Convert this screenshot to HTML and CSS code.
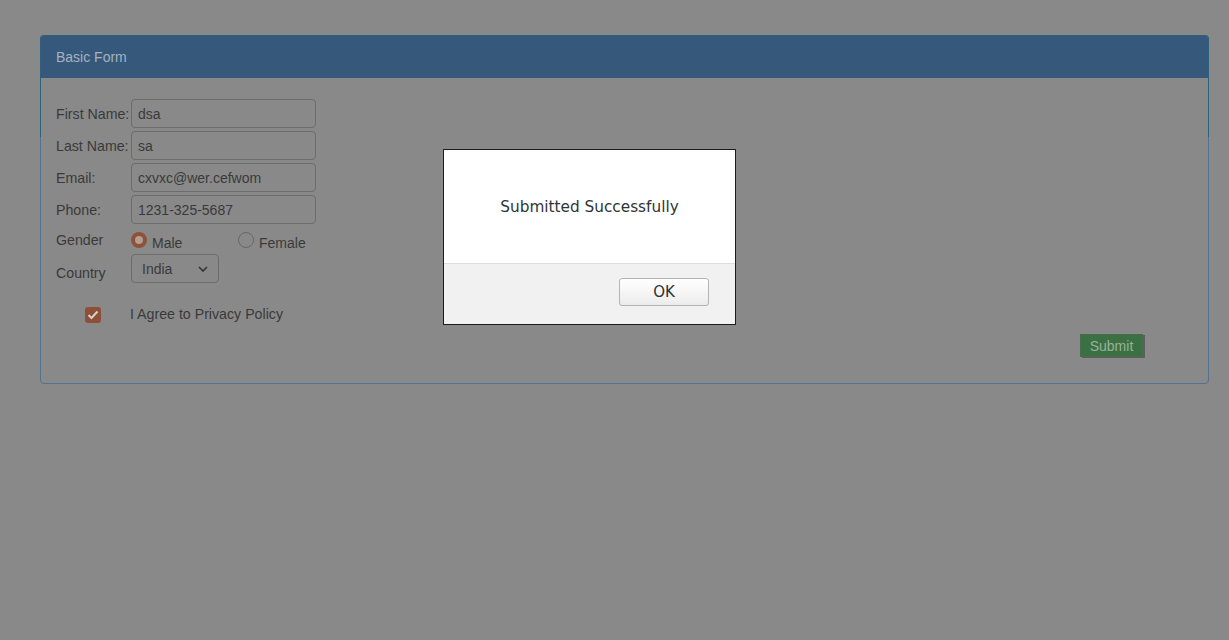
FILE: index.html
```html
<!DOCTYPE html>
<html>
<head>
<meta charset="utf-8">
<title>Basic Form</title>
<link rel="stylesheet" href="styles.css">
</head>
<body>
<div class="page">
  <div class="panel">
    <div class="panel-heading">Basic Form</div>
    <div class="panel-body">
      <div class="field">
        <label class="label">First Name:</label>
        <input class="input" type="text" value="dsa">
      </div>
      <div class="field">
        <label class="label">Last Name:</label>
        <input class="input" type="text" value="sa">
      </div>
      <div class="field">
        <label class="label">Email:</label>
        <input class="input" type="text" value="cxvxc@wer.cefwom">
      </div>
      <div class="field">
        <label class="label">Phone:</label>
        <input class="input" type="text" value="1231-325-5687">
      </div>
      <div class="field gender">
        <span class="label">Gender</span>
        <span class="option">
          <span class="radio checked"></span>
          <span class="option-text">Male</span>
        </span>
        <span class="option">
          <span class="radio"></span>
          <span class="option-text">Female</span>
        </span>
      </div>
      <div class="field country">
        <span class="label">Country</span>
        <div class="select">
          <span>India</span>
          <svg width="10" height="6" viewBox="0 0 10 6"><path d="M1 1 L5 5 L9 1" fill="none" stroke="#333" stroke-width="1.6"/></svg>
        </div>
      </div>
      <div class="agree">
        <span class="checkbox">
          <svg width="12" height="10" viewBox="0 0 12 10"><path d="M1.5 5 L4.5 8 L10.5 1.5" fill="none" stroke="#d8cfcb" stroke-width="2"/></svg>
        </span>
        <span class="agree-text">I Agree to Privacy Policy</span>
      </div>
      <div class="actions">
        <button class="submit">Submit</button>
      </div>
    </div>
  </div>
</div>
<div class="backdrop">
  <div class="dialog">
    <div class="dialog-body">Submitted Successfully</div>
    <div class="dialog-footer">
      <button class="ok">OK</button>
    </div>
  </div>
</div>
</body>
</html>
```
FILE: styles.css
```css
html, body {
  margin: 0;
  padding: 0;
}
body {
  background: #898989;
  font-family: "Liberation Sans", Arial, sans-serif;
  font-size: 14px;
  color: #3a3a3a;
  height: 640px;
  overflow: hidden;
}
.page {
  padding: 35px 20px 0 40px;
}
.panel {
  position: relative;
  border: 1px solid #52728f;
  border-radius: 4px;
}
.panel::before {
  content: "";
  position: absolute;
  top: -1px;
  left: -1px;
  right: -1px;
  height: 101px;
  border: 1px solid #2d6079;
  border-bottom: none;
  border-radius: 4px 4px 0 0;
  pointer-events: none;
}
.panel-heading {
  height: 42px;
  line-height: 42px;
  padding-left: 15px;
  background: #35587b;
  color: #a6b2bf;
  font-size: 14px;
  border-radius: 3px 3px 0 0;
}
.panel-body {
  padding: 21px 15px 26px 15px;
}
.field {
  display: flex;
  align-items: center;
  margin-bottom: 3px;
}
.label {
  width: 75px;
  flex: none;
  line-height: 20px;
  font-size: 14.2px;
}
.input {
  box-sizing: border-box;
  width: 185px;
  height: 29px;
  border: 1px solid #6c6c6c;
  border-radius: 4px;
  background: transparent;
  padding: 0 6px;
  font-family: "Liberation Sans", Arial, sans-serif;
  font-size: 14px;
  color: #3a3a3a;
  outline: none;
}
.field.gender {
  align-items: flex-start;
  height: 26px;
  margin-bottom: 1px;
}
.gender .label {
  line-height: 26px;
}
.option {
  display: flex;
  align-items: flex-start;
  width: 107px;
}
.radio {
  box-sizing: border-box;
  width: 16px;
  height: 16px;
  margin-top: 5px;
  border-radius: 50%;
  border: 1px solid #666;
  flex: none;
}
.radio.checked {
  border: 4px solid #8e5139;
  background: #b39c92;
}
.option-text {
  margin-left: 5px;
  margin-top: 6px;
  line-height: 20px;
}
.field.country {
  align-items: flex-start;
}
.country .label {
  margin-top: 9px;
}
.select {
  box-sizing: border-box;
  width: 88px;
  height: 29px;
  border: 1px solid #6c6c6c;
  border-radius: 4px;
  display: flex;
  align-items: center;
  justify-content: space-between;
  padding: 0 10px 0 10px;
}
.select svg {
  margin-top: 1px;
}
.agree {
  display: flex;
  align-items: center;
  margin-top: 24px;
  padding-left: 29px;
  height: 16px;
}
.checkbox {
  box-sizing: border-box;
  width: 16px;
  height: 16px;
  border-radius: 3px;
  background: #8c5039;
  display: flex;
  align-items: center;
  justify-content: center;
  flex: none;
}
.agree-text {
  margin-left: 29px;
  margin-top: -2px;
  font-size: 14.2px;
}
.actions {
  display: flex;
  justify-content: flex-end;
  margin-top: 11px;
  padding-right: 50px;
}
.submit {
  box-sizing: border-box;
  width: 63px;
  height: 23px;
  background: #3b7042;
  color: #98b29b;
  border: 1px solid #4b6b4e;
  box-shadow: 2px 1px 0 #5d5d5d;
  font-family: "Liberation Sans", Arial, sans-serif;
  font-size: 14px;
  padding: 0;
  cursor: pointer;
}
.backdrop {
  position: fixed;
  inset: 0;
}
.dialog {
  position: absolute;
  left: 443px;
  top: 149px;
  width: 291px;
  border: 1px solid #1c1c1c;
  background: #fff;
  font-family: "DejaVu Sans", sans-serif;
  color: #2e3436;
}
.dialog-body {
  height: 113px;
  display: flex;
  align-items: center;
  justify-content: center;
  font-size: 15.3px;
  box-sizing: border-box;
}
.dialog-footer {
  height: 61px;
  box-sizing: border-box;
  border-top: 1px solid #dedede;
  background: #f1f1f1;
  display: flex;
  justify-content: flex-end;
  align-items: flex-start;
  padding: 14px 26px 0 0;
}
.ok {
  box-sizing: border-box;
  width: 90px;
  height: 28px;
  border: 1px solid #b3b3b3;
  border-radius: 3px;
  background: linear-gradient(#ffffff, #ececec);
  font-family: "DejaVu Sans", sans-serif;
  font-size: 15px;
  color: #2e3436;
  padding: 0;
}
```
